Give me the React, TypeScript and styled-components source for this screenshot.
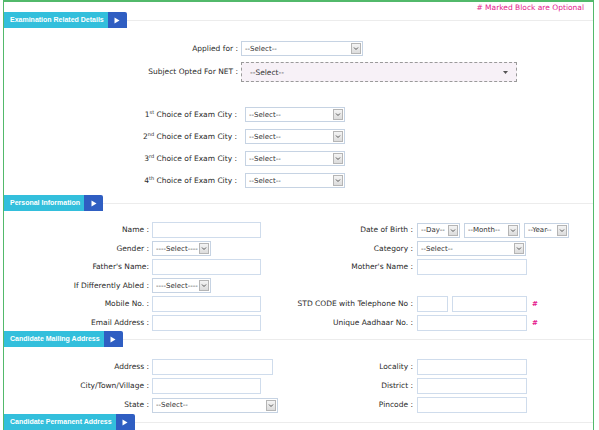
import React from "react";
import styled, { createGlobalStyle } from "styled-components";

const Global = createGlobalStyle`
  html, body { margin: 0; padding: 0; background: #fff; }
  body { font-family: "DejaVu Sans", Verdana, sans-serif; font-size: 7.5px; color: #2a2a2a; }
  * { box-sizing: border-box; }
`;

const Panel = styled.div`
  margin-left: 3px;
  width: 591px;
  height: 430px;
  border: 1px solid #52b96b;
  border-top-width: 2px;
  border-bottom: none;
  overflow: hidden;
  display: flex;
  flex-direction: column;
`;

const Notice = styled.div`
  height: 9px;
  text-align: right;
  padding-right: 9px;
  color: #e5168c;
  font-size: 7.5px;
  line-height: 9px;
  margin-top: 1px;
`;

const HeaderRow = styled.div<{ $mt?: number }>`
  display: flex;
  align-items: center;
  height: 16px;
  margin-top: ${(p) => p.$mt ?? 0}px;
`;

const Tab = styled.div`
  height: 16px;
  background: #33bfdc;
  color: #fff;
  font-family: "Liberation Sans", Arial, sans-serif;
  font-weight: bold;
  font-size: 7px;
  line-height: 16px;
  padding: 0 4px 0 6px;
  white-space: nowrap;
`;

const TabArrow = styled.div`
  width: 19px;
  height: 16px;
  background: #2f5ec2;
  border-top-right-radius: 2px;
  display: flex;
  align-items: center;
  justify-content: center;
`;

const Rule = styled.div`
  flex: 1;
  height: 1px;
  background: #ececec;
`;

const Grid = styled.div<{ $cols: string; $rowGap: number; $mt: number }>`
  display: grid;
  grid-template-columns: ${(p) => p.$cols};
  row-gap: ${(p) => p.$rowGap}px;
  margin-top: ${(p) => p.$mt}px;
  align-items: center;
`;

const Label = styled.div<{ $pr?: number }>`
  text-align: right;
  padding-right: ${(p) => p.$pr ?? 3}px;
  white-space: nowrap;
  line-height: 10px;
  sup { font-size: 5px; vertical-align: 3px; line-height: 0; }
`;

const Field = styled.div`
  display: flex;
  align-items: center;
  gap: 4px;
`;

const TextBox = styled.div<{ $w: number }>`
  width: ${(p) => p.$w}px;
  height: 16px;
  border: 1px solid #cfdcec;
  background: #fff;
`;

const SelectBox = styled.div<{ $w: number }>`
  width: ${(p) => p.$w}px;
  height: 15px;
  border: 1px solid #c6d3e3;
  background: #fff;
  display: flex;
  align-items: center;
  padding: 0 1px 0 3px;
  color: #333;
  font-size: 7px;
`;

const SelectText = styled.span`
  flex: 1;
  white-space: nowrap;
  overflow: hidden;
`;

const ArrowBtn = styled.div`
  width: 10px;
  height: 11px;
  border: 1px solid #b5b5b5;
  background: linear-gradient(#f4f4f4, #dcdcdc);
  display: flex;
  align-items: center;
  justify-content: center;
`;

const BigSelect = styled.div`
  width: 276px;
  height: 20px;
  border: 1px dashed #9a9a9a;
  background: #f7f1f7;
  display: flex;
  align-items: center;
  padding: 0 8px 0 8px;
  font-size: 7.5px;
  color: #333;
`;

const Hash = styled.span`
  color: #e5168c;
  font-weight: bold;
  font-size: 7px;
  margin-left: 1px;
`;

const Chevron = () => (
  <svg width="6" height="5" viewBox="0 0 6 5">
    <path d="M1 1.5 L3 3.5 L5 1.5" stroke="#555" strokeWidth="1" fill="none" />
  </svg>
);

const Play = () => (
  <svg width="6" height="7" viewBox="0 0 6 7">
    <path d="M0.5 0.5 L5.5 3.5 L0.5 6.5 Z" fill="#fff" />
  </svg>
);

const Caret = () => (
  <svg width="5" height="3" viewBox="0 0 5 3">
    <path d="M0 0 L5 0 L2.5 3 Z" fill="#555" />
  </svg>
);

const Header = ({ title, mt }: { title: string; mt?: number }) => (
  <HeaderRow $mt={mt}>
    <Tab>{title}</Tab>
    <TabArrow>
      <Play />
    </TabArrow>
    <Rule />
  </HeaderRow>
);

const Sel = ({ w, text = "--Select--" }: { w: number; text?: string }) => (
  <SelectBox $w={w}>
    <SelectText>{text}</SelectText>
    <ArrowBtn>
      <Chevron />
    </ArrowBtn>
  </SelectBox>
);

const cities = [
  ["1", "st"],
  ["2", "nd"],
  ["3", "rd"],
  ["4", "th"],
];

const PCOLS = "148px 133px 132px 1fr";

export default function App() {
  return (
    <>
      <Global />
      <Panel>
        <Notice># Marked Block are Optional</Notice>
        <Header title="Examination Related Details" mt={0} />
        <Grid $cols="237px 1fr" $rowGap={6} $mt={13}>
          <Label>Applied for :</Label>
          <Field>
            <Sel w={122} />
          </Field>
          <Label>Subject Opted For NET :</Label>
          <Field>
            <BigSelect>
              <SelectText>--Select--</SelectText>
              <Caret />
            </BigSelect>
          </Field>
        </Grid>
        <Grid $cols="241px 1fr" $rowGap={7} $mt={25}>
          {cities.map(([n, s]) => (
            <React.Fragment key={n}>
              <Label $pr={8}>
                {n}
                <sup>{s}</sup> Choice of Exam City :
              </Label>
              <Field>
                <Sel w={100} />
              </Field>
            </React.Fragment>
          ))}
        </Grid>
        <Header title="Personal Information" mt={7} />
        <Grid $cols={PCOLS} $rowGap={3} $mt={11}>
          <Label>Name :</Label>
          <Field>
            <TextBox $w={109} />
          </Field>
          <Label $pr={4}>Date of Birth :</Label>
          <Field>
            <Sel w={43} text="--Day--" />
            <Sel w={56} text="--Month--" />
            <Sel w={45} text="--Year--" />
          </Field>

          <Label>Gender :</Label>
          <Field>
            <Sel w={59} text="----Select----" />
          </Field>
          <Label $pr={4}>Category :</Label>
          <Field>
            <Sel w={109} />
          </Field>

          <Label>Father's Name:</Label>
          <Field>
            <TextBox $w={109} />
          </Field>
          <Label $pr={4}>Mother's Name :</Label>
          <Field>
            <TextBox $w={110} />
          </Field>

          <Label>If Differently Abled :</Label>
          <Field>
            <Sel w={59} text="----Select----" />
          </Field>
          <div />
          <div />

          <Label>Mobile No. :</Label>
          <Field>
            <TextBox $w={109} />
          </Field>
          <Label $pr={4}>STD CODE with Telephone No :</Label>
          <Field>
            <TextBox $w={31} />
            <TextBox $w={75} />
            <Hash>#</Hash>
          </Field>

          <Label>Email Address :</Label>
          <Field>
            <TextBox $w={109} />
          </Field>
          <Label $pr={4}>Unique Aadhaar No. :</Label>
          <Field>
            <TextBox $w={110} />
            <Hash>#</Hash>
          </Field>
        </Grid>
        <Header title="Candidate Mailing Address" mt={0} />
        <Grid $cols={PCOLS} $rowGap={3} $mt={12}>
          <Label>Address :</Label>
          <Field>
            <TextBox $w={121} />
          </Field>
          <Label $pr={4}>Locality :</Label>
          <Field>
            <TextBox $w={110} />
          </Field>

          <Label>City/Town/Village :</Label>
          <Field>
            <TextBox $w={109} />
          </Field>
          <Label $pr={4}>District :</Label>
          <Field>
            <TextBox $w={110} />
          </Field>

          <Label>State :</Label>
          <Field>
            <Sel w={126} />
          </Field>
          <Label $pr={4}>Pincode :</Label>
          <Field>
            <TextBox $w={110} />
          </Field>
        </Grid>
        <Header title="Candidate Permanent Address" mt={1} />
      </Panel>
    </>
  );
}
